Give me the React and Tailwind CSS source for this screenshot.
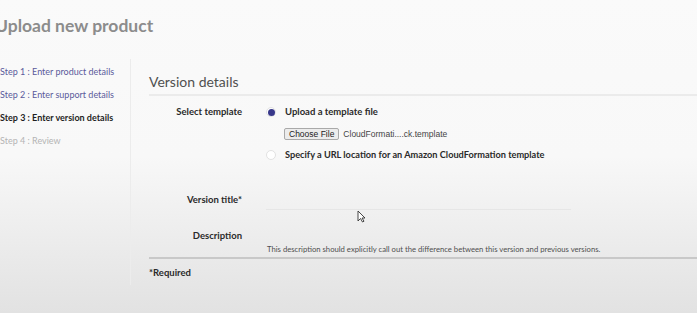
const steps = [
  { label: 'Step 1 : Enter product details', cls: 'text-[#5b5b9b]' },
  { label: 'Step 2 : Enter support details', cls: 'text-[#5b5b9b]' },
  { label: 'Step 3 : Enter version details', cls: 'text-[#1f1f1f] font-bold' },
  { label: 'Step 4 : Review', cls: 'text-[#b4b4b4]' },
];

function Radio({ checked }) {
  return (
    <span className="w-[10px] h-[10px] rounded-full border border-[#e2e2e2] bg-white flex items-center justify-center shrink-0">
      {checked && <span className="w-[7px] h-[7px] rounded-full bg-[#38388a]" />}
    </span>
  );
}

function Row({ label, children, className = '' }) {
  return (
    <div className={`flex ${className}`}>
      <div className="w-[93px] text-right text-[9.5px] leading-[14px] font-bold text-[#2a2a2a] shrink-0">{label}</div>
      <div className="ml-[24px] flex-1">{children}</div>
    </div>
  );
}

export default function App() {
  return (
    <div
      className="w-[697px] h-[313px] overflow-hidden bg-gradient-to-b from-[#fafafa] via-[#f8f8f8] to-[#e2e2e2] relative"
      style={{ fontFamily: 'Lato, "Noto Sans", sans-serif' }}
    >
      <h1 className="ml-[-5px] pt-[12px] text-[17.5px] leading-[28px] font-bold text-[#8c8c8c]">
        Upload new product
      </h1>
      <div className="flex mt-[19px]">
        <div className="w-[131px] border-r border-[#ececec] h-[226px] pt-[1px]">
          {steps.map((s) => (
            <div key={s.label} className={`text-[9px] leading-[23px] whitespace-nowrap ${s.cls}`}>{s.label}</div>
          ))}
        </div>
        <div className="flex-1 pl-[18px]">
          <div className="text-[14px] leading-[20px] text-[#505050] pt-[13px] pb-[2px] border-b-2 border-[#ebebeb]">
            Version details
          </div>
          <Row label="Select template" className="mt-[9px]">
            <div className="flex items-center gap-[9px] h-[14px]">
              <Radio checked />
              <span className="text-[9.5px] font-bold text-[#2a2a2a]">Upload a template file</span>
            </div>
          </Row>
          <div className="ml-[135px] mt-[9px] flex items-center gap-[4px] h-[12px]">
            <span
              className="border border-[#a9a9a9] bg-[#ececec] rounded-[2px] px-[4px] text-[8.5px] leading-[10px] text-[#222]"
              style={{ fontFamily: '"Liberation Sans", Arial, sans-serif' }}
            >
              Choose File
            </span>
            <span className="text-[8.5px] text-[#444]" style={{ fontFamily: '"Liberation Sans", Arial, sans-serif' }}>
              CloudFormati....ck.template
            </span>
          </div>
          <div className="ml-[117px] mt-[8px] flex items-center gap-[9px] h-[14px]">
            <Radio />
            <span className="text-[9.2px] font-bold text-[#2a2a2a]">
              Specify a URL location for an Amazon CloudFormation template
            </span>
          </div>
          <Row label="Version title*" className="mt-[31px]">
            <div className="w-[305px] h-[17px] border-b border-[#e6e6e6]" />
          </Row>
          <Row label="Description" className="mt-[19px]">
            <div className="h-[15px]" />
            <div className="ml-[1px] text-[7.7px] leading-[10px] text-[#505050]">
              This description should explicitly call out the difference between this version and previous versions.
            </div>
          </Row>
          <div className="mt-[3px] border-b-2 border-[#c8c8c8]" />
          <div className="mt-[7px] text-[9.5px] leading-[14px] font-bold text-[#2a2a2a]">*Required</div>
        </div>
      </div>
      <svg className="absolute left-[357px] top-[210px]" width="9" height="13" viewBox="0 0 9 13">
        <path d="M1 1 L1 11 L3.5 8.5 L5.5 12 L7 11.2 L5 8 L8 8 Z" fill="white" stroke="#333" strokeWidth="0.9" />
      </svg>
    </div>
  );
}
